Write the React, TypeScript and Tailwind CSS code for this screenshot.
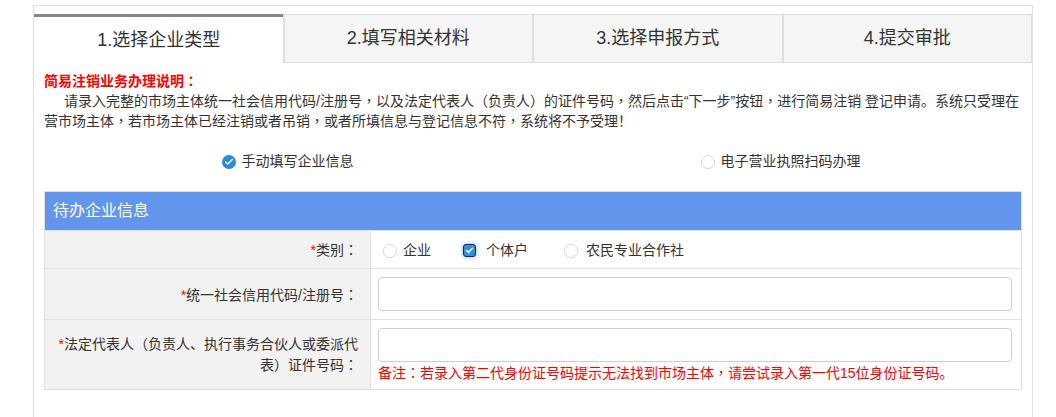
import { Check } from "lucide-react"

const tabs = ["1.选择企业类型", "2.填写相关材料", "3.选择申报方式", "4.提交审批"]

// full-width comma/colon centred, like the original page's font
function P({ children }: { children: string }) {
    return (
        <>
            {children.split(/([，：])/).map((part, i) =>
                part === "，" || part === "：" ?
                    <span key={i} className="font-['Noto_Sans_CJK_TC',sans-serif] leading-none">{part}</span>
                    :
                    part
            )}
        </>
    )
}

function Radio({ checked, label, gap = "gap-[6px]" }: { checked?: boolean, label: string, gap?: string }) {
    return (
        <span className={`flex items-center ${gap}`}>
            {checked ?
                <span className="w-[14px] h-[14px] rounded-full bg-[#2b8bd6] flex items-center justify-center">
                    <Check size={10} strokeWidth={3.5} className="text-white" />
                </span>
                :
                <span className="w-[14px] h-[14px] rounded-full border border-[#d9d9d9] bg-white" />
            }
            <span>{label}</span>
        </span>
    )
}

function Checkbox({ label }: { label: string }) {
    return (
        <span className="flex items-center gap-[10px]">
            <span className="w-[13px] h-[13px] rounded-[3px] border border-[#1f2a36] bg-[#2f8fe6] flex items-center justify-center shadow-[0_0_4px_#7fb4ff]">
                <Check size={9} strokeWidth={4} className="text-white" />
            </span>
            <span>{label}</span>
        </span>
    )
}

function Row({ label, height, children }: { label: React.ReactNode, height: string, children: React.ReactNode }) {
    return (
        <div className={`flex border-t border-[#e2e2e2] ${height}`}>
            <div className="w-[326px] shrink-0 bg-[#f2f2f2] border-r border-[#e2e2e2] flex items-center justify-end text-right pr-[12px] pl-[10px]">
                {label}
            </div>
            {children}
        </div>
    )
}

const Star = () => <span className="text-[#ff0000]">*</span>

export default function App() {
    return (
        <div className="min-h-[417px] bg-white pt-[5px] pl-[33px] pr-[23px] font-['Liberation_Sans','Noto_Sans_CJK_SC',sans-serif] text-[#333] text-[14px]">
            <div className="border border-b-0 border-[#e0e0e0] pt-[8px] h-[412px]">
                <div className="grid grid-cols-4 h-[49px]">
                    {tabs.map((t, i) => (
                        i === 0 ?
                            <div key={t} className="border-t-[3px] border-[#888] bg-white flex items-center justify-center text-[18px]">{t}</div>
                            :
                            <div key={t} className="border border-l-2 border-[#dedede] bg-[#f5f5f5] flex items-center justify-center text-[18px] -ml-px">{t}</div>
                    ))}
                </div>

                <div className="px-[10px] pt-[8px]">
                    <h3 className="text-[#ff0000] font-bold leading-[20px]"><P>简易注销业务办理说明：</P></h3>
                    <p className="leading-[20px] whitespace-nowrap">
                        <span className="pl-[20px]"><P>请录入完整的市场主体统一社会信用代码/注册号，以及法定代表人（负责人）的证件号码，然后点击“下一步”按钮，进行简易注销 登记申请。系统只受理在</P></span><br />
                        <P>营市场主体，若市场主体已经注销或者吊销，或者所填信息与登记信息不符，系统将不予受理！</P>
                    </p>

                    <div className="grid grid-cols-2 mt-[20px] h-[20px] items-center">
                        <div className="flex justify-center pr-[2px]"><Radio checked label="手动填写企业信息" /></div>
                        <div className="flex justify-center pl-[6px]"><Radio label="电子营业执照扫码办理" /></div>
                    </div>

                    <div className="mt-[20px] border border-[#e0e0e0]">
                        <div className="h-[38px] bg-[#6495ed] text-white text-[16px] flex items-center pl-[8px]">待办企业信息</div>

                        <Row height="h-[38px]" label={<span className="pt-[2px]"><Star /><P>类别：</P></span>}>
                            <div className="flex items-center gap-[28px] pl-[12px] pt-[2px]">
                                <Radio label="企业" />
                                <span className="pl-[4px]"><Checkbox label="个体户" /></span>
                                <span className="pl-[8px]"><Radio label="农民专业合作社" gap="gap-[8px]" /></span>
                            </div>
                        </Row>

                        <Row height="h-[51px]" label={<span className="pt-[2px]"><Star /><P>统一社会信用代码/注册号：</P></span>}>
                            <div className="flex-1 flex items-center pl-[7px] pr-[9px]">
                                <div className="w-full h-[34px] rounded-[4px] border border-[#cfcfcf] bg-white" />
                            </div>
                        </Row>

                        <Row height="h-[70px]" label={<span className="leading-[21px] block"><Star /><P>法定代表人（负责人、执行事务合伙人或委派代</P><br /><P>表）证件号码：</P></span>}>
                            <div className="flex-1 flex flex-col pl-[7px] pr-[9px] pt-[8px]">
                                <div className="w-full h-[34px] rounded-[4px] border border-[#cfcfcf] bg-white" />
                                <div className="text-[#ff0000] leading-[20px] mt-[1px]"><P>备注：若录入第二代身份证号码提示无法找到市场主体，请尝试录入第一代15位身份证号码。</P></div>
                            </div>
                        </Row>
                    </div>
                </div>
            </div>
        </div>
    )
}
